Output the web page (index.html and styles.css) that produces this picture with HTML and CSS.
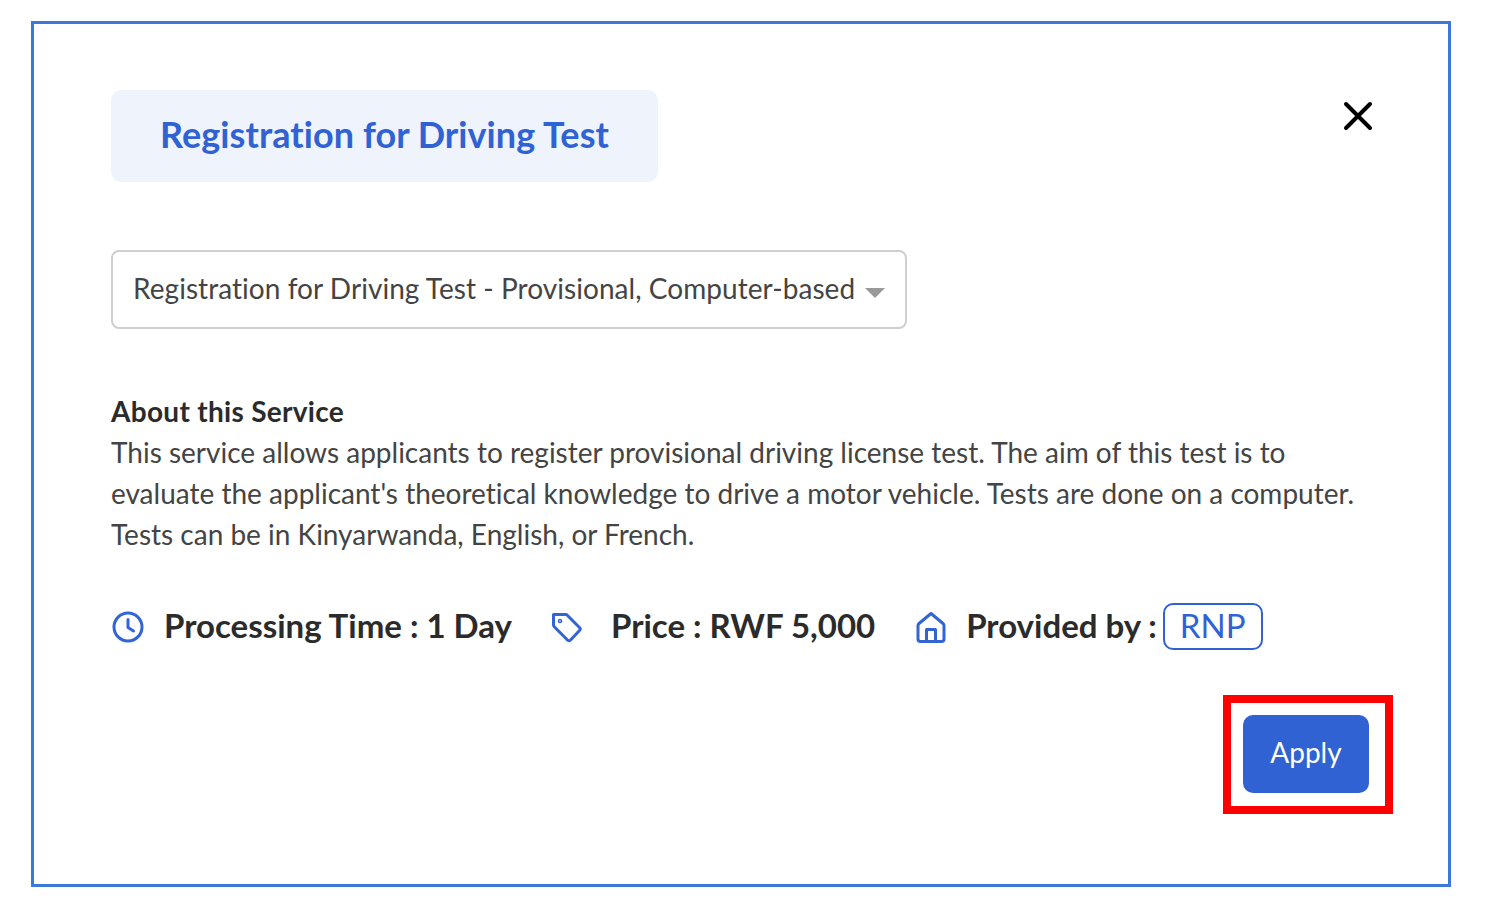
FILE: index.html
```html
<!DOCTYPE html>
<html lang="en">
<head>
  <meta charset="UTF-8" />
  <meta name="viewport" content="width=device-width, initial-scale=1.0" />
  <title>Registration for Driving Test</title>
  <link rel="stylesheet" href="styles.css">
</head>
<body>
  <div class="modal">
    <div class="modal-header">
      <h1 class="modal-title">Registration for Driving Test</h1>
      <button class="close-btn" aria-label="Close">
        <svg width="30" height="30" viewBox="0 0 30 30" fill="none" stroke="#000" stroke-width="4" stroke-linecap="round">
          <path d="M3 3L27 27M27 3L3 27" />
        </svg>
      </button>
    </div>

    <div class="service-select">
      <span>Registration for Driving Test - Provisional, Computer-based</span>
      <span class="caret"></span>
    </div>

    <div class="about">
      <h2>About this Service</h2>
      <p>This service allows applicants to register provisional driving license test. The aim of this test is to evaluate the applicant's theoretical knowledge to drive a motor vehicle. Tests are done on a computer. Tests can be in Kinyarwanda, English, or French.</p>
    </div>

    <div class="meta">
      <div class="meta-item time">
        <svg width="32" height="32" viewBox="0 0 32 32" fill="none" stroke="#3264d6" stroke-width="3" stroke-linecap="round" stroke-linejoin="round">
          <circle cx="16" cy="16" r="14" />
          <path d="M16 8.500V16.500L21.500 20" />
        </svg>
        <span class="meta-label">Processing Time : 1 Day</span>
      </div>
      <div class="meta-item price">
        <svg width="32" height="32" viewBox="0 0 32 32" fill="none" stroke="#3264d6" stroke-width="3" stroke-linecap="round" stroke-linejoin="round">
          <path d="M2.500 3.500H15.500L28.500 16.500C29.500 17.500 29.500 18.500 28.500 19.500L19.500 29C18.500 30 17.500 30 16.500 29L3.500 16C2.800 15.300 2.500 14.800 2.500 14Z" />
          <circle cx="9" cy="10" r="0.800" />
        </svg>
        <span class="meta-label">Price : RWF 5,000</span>
      </div>
      <div class="meta-item provider">
        <svg width="30" height="32" viewBox="0 0 30 32" fill="none" stroke="#3264d6" stroke-width="3" stroke-linecap="round" stroke-linejoin="round">
          <path d="M3 12.500L15 2.500L27 12.500C27.700 13.100 28 13.800 28 14.500V28C28 29.500 27 30.500 25.500 30.500H4.500C3 30.500 2 29.500 2 28V14.500C2 13.800 2.300 13.100 3 12.500Z" />
          <path d="M10.500 30.500V18.500H19.500V30.500" />
        </svg>
        <span class="meta-label">Provided by :</span>
        <span class="provider-tag">RNP</span>
      </div>
    </div>

    <div class="actions">
      <div class="highlight">
        <button class="apply-btn">Apply</button>
      </div>
    </div>
  </div>
</body>
</html>
```

FILE: styles.css
```css
* {
  box-sizing: border-box;
}

body {
  margin: 0;
  background-color: #ffffff;
  font-family: 'Lato', 'Noto Sans', sans-serif;
  font-variant-ligatures: none;
  color: #333;
}

.modal {
  width: 1420px;
  height: 866px;
  margin: 21px 0 0 31px;
  padding: 66px 55px 0 77px;
  border: 3px solid #3c78d8;
  background-color: #ffffff;
}

.modal-header {
  display: flex;
  justify-content: space-between;
  align-items: flex-start;
}

.modal-title {
  width: 547px;
  height: 92px;
  margin: 0;
  padding-bottom: 4px;
  display: flex;
  align-items: center;
  justify-content: center;
  background-color: #eef3fc;
  border-radius: 10px;
  color: #3062d4;
  font-size: 36px;
  font-weight: 700;
  letter-spacing: 0.07px;
}

.close-btn {
  padding: 0;
  margin: 11px 20px 0 0;
  border: none;
  background: none;
  display: flex;
  cursor: pointer;
}

.service-select {
  width: 796px;
  height: 79px;
  margin-top: 68px;
  padding: 0 20px 3px 20px;
  display: flex;
  align-items: center;
  justify-content: space-between;
  border: 2px solid #cfcfcf;
  border-radius: 8px;
  font-size: 28px;
  letter-spacing: 0.05px;
  color: #444;
}

.caret {
  width: 0;
  height: 0;
  margin-top: 10px;
  border-left: 10px solid transparent;
  border-right: 10px solid transparent;
  border-top: 10px solid #999;
}

.about {
  margin-top: 62px;
  font-size: 28px;
  line-height: 41px;
}

.about h2 {
  margin: 0;
  font-size: 28px;
  font-weight: 700;
  letter-spacing: 0.3px;
  color: #2b2b2b;
}

.about p {
  margin: 0;
  color: #444;
}

.meta {
  margin-top: 48px;
  display: flex;
  align-items: center;
  font-size: 33px;
  font-weight: 700;
  color: #2b2b2b;
}

.meta-item {
  display: flex;
  align-items: center;
}

.meta-item svg {
  flex-shrink: 0;
}

.meta-label {
  padding-bottom: 4px;
}

.time svg {
  margin: 0 20px 0 1px;
}

.price {
  margin-left: 39px;
}

.price svg {
  margin-right: 28px;
}

.provider {
  margin-left: 41px;
}

.provider svg {
  margin-right: 20px;
}

.provider-tag {
  height: 47px;
  margin-left: 6px;
  padding: 0 15px 3px;
  display: flex;
  align-items: center;
  border: 2px solid #3062d4;
  border-radius: 10px;
  color: #3062d4;
  font-weight: 400;
}

.actions {
  margin-top: 45px;
  display: flex;
  justify-content: flex-end;
}

.highlight {
  width: 170px;
  height: 119px;
  padding: 12px 16px 12px 12px;
  border: 8px solid #ff0000;
}

.apply-btn {
  width: 126px;
  height: 78px;
  padding: 0 0 4px;
  border: none;
  border-radius: 10px;
  background-color: #3062d4;
  color: #ffffff;
  font-family: inherit;
  font-size: 28px;
  cursor: pointer;
}
```
